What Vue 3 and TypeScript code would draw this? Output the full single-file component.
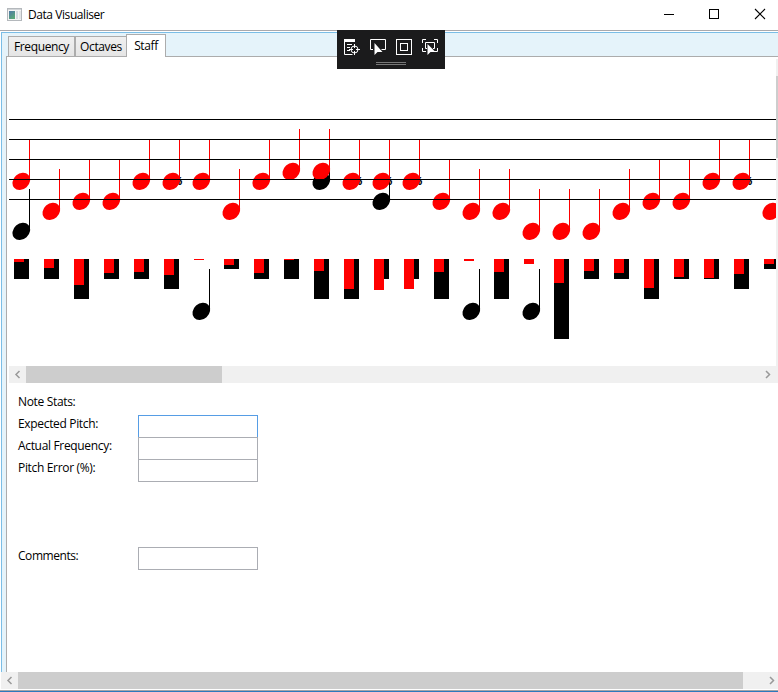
<script setup lang="ts">
import { ref } from 'vue'

interface Beat {
  sung: number
  expected?: number
  sharp?: boolean
  length: number
  held: number
}

const beats: Beat[] = [
  { sung: 181, expected: 231, length: 20, held: 3 },
  { sung: 211, length: 20, held: 9 },
  { sung: 201, length: 40, held: 26 },
  { sung: 201, length: 20, held: 14 },
  { sung: 181, length: 20, held: 13 },
  { sung: 181, sharp: true, length: 30, held: 16 },
  { sung: 181, expected: 311, length: 0, held: 1 },
  { sung: 211, length: 10, held: 6 },
  { sung: 181, length: 20, held: 14 },
  { sung: 171, length: 20, held: 1 },
  { sung: 171, expected: 181, length: 40, held: 12 },
  { sung: 181, sharp: true, length: 40, held: 30 },
  { sung: 181, expected: 201, sharp: true, length: 20, held: 31 },
  { sung: 181, sharp: true, length: 20, held: 30 },
  { sung: 201, length: 40, held: 13 },
  { sung: 211, expected: 311, length: 0, held: 2 },
  { sung: 211, length: 40, held: 13 },
  { sung: 231, expected: 311, length: 0, held: 5 },
  { sung: 231, length: 80, held: 24 },
  { sung: 231, length: 20, held: 12 },
  { sung: 211, length: 20, held: 14 },
  { sung: 201, length: 40, held: 29 },
  { sung: 201, length: 20, held: 18 },
  { sung: 181, length: 20, held: 19 },
  { sung: 181, sharp: true, length: 30, held: 15 },
  { sung: 211, length: 10, held: 5 },
]

const staffLines = [119, 139, 159, 179, 199]
const tabs = ['Frequency', 'Octaves', 'Staff']
const active = ref('Staff')
const stats = ['Expected Pitch:', 'Actual Frequency:', 'Pitch Error (%):']
</script>

<template>
  <div class="window">
    <header class="titlebar">
      <svg class="app-icon" width="16" height="14" viewBox="0 0 16 14">
        <defs>
          <linearGradient id="pane" x1="0" y1="0" x2="0.6" y2="1">
            <stop offset="0" stop-color="#4f78a8" />
            <stop offset="1" stop-color="#59a878" />
          </linearGradient>
        </defs>
        <rect x=".5" y=".5" width="14" height="12" fill="#f4f4f4" stroke="#b4b8bc" />
        <rect x="1" y="1" width="13" height="1" fill="#d2d5d8" />
        <rect x="2" y="3" width="6" height="8" fill="url(#pane)" />
        <rect x="9" y="3" width="2" height="8" fill="#d3dbe0" />
        <rect x="12" y="3" width="2" height="8" fill="#e3e6e8" />
      </svg>
      <span class="title">Data Visualiser</span>
      <svg class="controls" width="110" height="30" viewBox="0 0 110 30" fill="none" stroke="#000">
        <path d="M4 14.500h10" />
        <rect x="49.500" y="9.500" width="9" height="9" />
        <path d="M95 9l10 10M105 9l-10 10" stroke-width="1.1" />
      </svg>
    </header>

    <main class="client">
      <nav class="tabs">
        <button
          v-for="tab in tabs"
          :key="tab"
          :class="['tab', tab.toLowerCase(), { active: active === tab }]"
          @click="active = tab"
        >{{ tab }}</button>
      </nav>

      <section class="page">
        <div class="score-row">
          <svg class="score" width="767" height="309" viewBox="9 57 767 309">
            <g v-for="(b, i) in beats" :key="i" :transform="`translate(${30 * i} 0)`">
              <text v-if="b.sharp" class="sharp" x="23" y="185">%</text>
              <g v-if="b.expected" fill="#000">
                <rect x="29" :y="b.expected - 42" width="1" height="42" />
                <ellipse cx="21.3" :cy="b.expected + 0.4" rx="9.6" ry="7.8" :transform="`rotate(-42 21.3 ${b.expected + 0.4})`" />
              </g>
              <g fill="#f00">
                <rect x="29" :y="b.sung - 42" width="1" height="42" />
                <ellipse cx="21.3" :cy="b.sung + 0.4" rx="9.6" ry="7.8" :transform="`rotate(-42 21.3 ${b.sung + 0.4})`" />
              </g>
              <rect x="14" y="259" width="15" :height="b.length" />
              <rect x="14" y="259" width="10" :height="b.held" fill="#f00" />
            </g>
            <rect v-for="y in staffLines" :key="y" x="9" :y="y" width="767" height="1" />
          </svg>
          <div class="vbar"><div class="vthumb"></div></div>
        </div>

        <div class="hbar inner">
          <svg class="arrow" width="17" height="17" viewBox="0 0 17 17"><path d="M10.500 5L7 8.500l3.500 3.500" /></svg>
          <div class="thumb"></div>
          <svg class="arrow end" width="17" height="17" viewBox="0 0 17 17"><path d="M6 5l3.500 3.500L6 12" /></svg>
        </div>

        <form class="stats" @submit.prevent>
          <div class="field"><span class="name">Note Stats:</span></div>
          <label v-for="(s, i) in stats" :key="s" class="field">
            <span class="name">{{ s }}</span>
            <input :class="{ focused: i === 0 }" type="text" />
          </label>
          <label class="field comments">
            <span class="name">Comments:</span>
            <input type="text" />
          </label>
        </form>
      </section>
    </main>

    <div class="hbar outer">
      <svg class="arrow" width="17" height="17" viewBox="0 0 17 17"><path d="M10.500 5L7 8.500l3.500 3.500" /></svg>
      <div class="thumb"></div>
      <svg class="arrow end" width="17" height="17" viewBox="0 0 17 17"><path d="M6 5l3.500 3.500L6 12" /></svg>
    </div>
    <div class="edge"></div>

    <div class="debug-bar">
      <svg width="108" height="39" viewBox="0 0 108 39" fill="none" stroke="#fff">
        <rect x="7" y="9" width="11" height="3" fill="#fff" stroke="none" />
        <path d="M7.500 11v13.500h8M10 14.500h5M10 17.500h3M10 20.500h3" />
        <circle cx="17.500" cy="19.500" r="3.500" />
        <path d="M17.500 14v4M17.500 21v4M12 19.500h4M19 19.500h4" />
        <path d="M36 19.500h-2.500v-10h15v10h-4" />
        <path d="M37.500 13v12l3-3h5z" fill="#fff" stroke="none" />
        <rect x="59.500" y="9.500" width="15" height="15" />
        <rect x="63.500" y="13.500" width="7" height="7" />
        <path d="M85.500 13V9.500H89M97 9.500h3.500V13M100.500 18v3.500H97M89 21.500h-3.500V18" />
        <path d="M90 18.500h-1.500v-6h9v6H96" />
        <path d="M90.500 14v11l3-3h5z" fill="#fff" stroke="none" />
        <path d="M39 32.500h30M39 34.500h30" stroke="#777" />
      </svg>
    </div>
  </div>
</template>

<style>
html,
body {
  overflow: hidden;
  background: #fff;
}
</style>

<style scoped>
.window {
  position: relative;
  display: flex;
  flex-direction: column;
  width: 778px;
  height: 692px;
  box-sizing: border-box;
  overflow: hidden;
  background: #fff;
  color: #000;
  font: 12px/16px "Open Sans", "Noto Sans", sans-serif;
  letter-spacing: -0.38px;
}
.titlebar {
  display: flex;
  align-items: center;
  height: 31px;
  box-sizing: border-box;
  padding-left: 7px;
  border-bottom: 1px solid #a9a9ad;
}
.app-icon {
  margin-top: -1px;
}
.title {
  margin-left: 5px;
  flex: 1;
  letter-spacing: -0.43px;
}
.controls {
  flex: none;
  margin-right: 8px;
}
.client {
  display: flex;
  flex-direction: column;
  height: 640px;
  margin: 1px 0 0 1px;
  box-sizing: border-box;
  border-top: 1px solid #7abde6;
  border-left: 1px solid #7abde6;
  background: #e5f3fa;
  padding-left: 4px;
}
.tabs {
  display: flex;
  align-items: flex-end;
  height: 23px;
  padding-left: 2px;
}
.tab {
  height: 20px;
  box-sizing: border-box;
  margin: 0;
  padding: 0;
  border: 1px solid #acacac;
  border-bottom: 0;
  background: linear-gradient(#f0f0f0, #e5e5e5);
  color: #000;
  font: inherit;
  letter-spacing: inherit;
  text-align: center;
}
.frequency {
  width: 67px;
}
.octaves {
  width: 51px;
  border-right: 0;
}
.staff {
  width: 40px;
}
.tab.active {
  position: relative;
  height: 23px;
  margin-bottom: -1px;
  padding-bottom: 1px;
  background: #fff;
}
.page {
  flex: 1;
  display: flex;
  flex-direction: column;
  border-top: 1px solid #acacac;
  border-left: 1px solid #acacac;
  background: #fff;
  padding-left: 2px;
}
.score-row {
  display: flex;
  height: 309px;
}
.score {
  flex: none;
}
.sharp {
  font: italic bold 11px "Open Sans", "Noto Sans", sans-serif;
  letter-spacing: 0;
}
.vbar {
  width: 2px;
  margin-top: 2px;
  padding-top: 17px;
  box-sizing: border-box;
  background: #f0f0f0;
}
.vthumb {
  height: 82px;
  background: #cdcdcd;
}
.hbar {
  display: flex;
  flex: none;
  height: 17px;
  background: #f0f0f0;
}
.inner .thumb {
  width: 196px;
}
.outer {
  margin-left: 1px;
}
.outer .thumb {
  width: 725px;
}
.thumb {
  background: #cdcdcd;
}
.arrow {
  flex: none;
  fill: none;
  stroke: #999;
  stroke-width: 1.5;
}
.arrow.end {
  margin-left: auto;
}
.inner .end {
  margin-right: 1px;
}
.outer .end {
  margin-right: -3px;
}
.stats {
  display: flex;
  flex-direction: column;
  padding: 10px 0 0 9px;
  letter-spacing: -0.33px;
}
.field {
  display: flex;
  height: 22px;
}
.name {
  width: 120px;
  padding-top: 1px;
}
.field input {
  width: 120px;
  height: 23px;
  box-sizing: border-box;
  border: 1px solid #abadb3;
  border-radius: 0;
  outline: 0;
  background: #fff;
  padding: 0 2px;
  font: inherit;
}
.field input.focused {
  border-color: #569de5;
}
.comments {
  margin-top: 66px;
}
.comments .name {
  letter-spacing: -0.45px;
}
.edge {
  height: 3px;
  box-sizing: border-box;
  border-top: 1px solid #fff;
  background: linear-gradient(#a4a4a8 50%, #2b79bd 50%);
}
.debug-bar {
  position: absolute;
  left: 337px;
  top: 30px;
  width: 108px;
  height: 39px;
  background: #1b1b1c;
}
.debug-bar svg {
  display: block;
}
</style>
